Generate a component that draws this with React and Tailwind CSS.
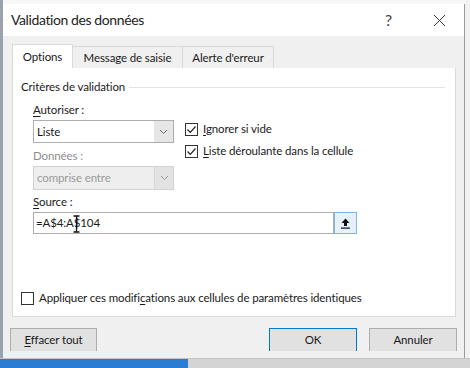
import React from "react";

function Check({ checked }) {
  return (
    <div className="w-[13px] h-[13px] border border-[#333] bg-white flex items-center justify-center shrink-0">
      {checked && (
        <svg width="11" height="11" viewBox="0 0 11 11">
          <path d="M1.5 5.5 L4.3 8.3 L9.5 2.5" fill="none" stroke="#222" strokeWidth="1.2" />
        </svg>
      )}
    </div>
  );
}

function Chevron({ color = "#666" }) {
  return (
    <svg width="9" height="6" viewBox="0 0 9 6">
      <path d="M1 1 L4.5 4.5 L8 1" fill="none" stroke={color} strokeWidth="1" />
    </svg>
  );
}

export default function App() {
  return (
    <div
      className="w-[470px] h-[368px] bg-[#f7f7f7] overflow-hidden flex flex-col text-[11.5px] tracking-[-0.12px] leading-[16px] text-[#1a1a1a]"
      style={{ fontFamily: 'Lato, "Noto Sans", sans-serif' }}
    >
      <div className="flex flex-1">
        <div className="w-[3px] bg-[#9aa3ad]" />
        {/* dialog */}
        <div className="mt-[4px] w-[462px] flex flex-col border-r border-[#9a9a9a] bg-[#f0f0f0]">
          <div className="h-[32px] bg-white flex items-center pl-[8px] pr-[18px]">
            <span className="text-[14px] tracking-[-0.4px] text-[#222] flex-1">Validation des données</span>
            <span className="text-[16px] text-[#444] mr-[41px]">?</span>
            <svg width="13" height="13" viewBox="0 0 13 13">
              <path d="M1 1 L12 12 M12 1 L1 12" stroke="#333" strokeWidth="1" />
            </svg>
          </div>

          <div className="pt-[9px] px-[9px]">
            {/* tabs */}
            <div className="flex items-end h-[23px]">
              <div className="w-[61px] h-[24px] bg-white border border-b-0 border-[#d9d9d9] flex items-center justify-center">
                Options
              </div>
              <div className="w-[110px] h-[22px] border-t border-r border-[#d9d9d9] flex items-center justify-center bg-[#f0f0f0]">
                Message de saisie
              </div>
              <div className="w-[91px] h-[22px] border-t border-r border-[#d9d9d9] flex items-center justify-center bg-[#f0f0f0]">
                Alerte d'erreur
              </div>
            </div>

            {/* panel */}
            <div className="w-[444px] h-[249px] bg-white border border-t-0 border-[#d9d9d9] pl-[8px] pt-[11px]">
              <div className="flex items-center h-[16px] pr-[10px]">
                <span>Critères de validation</span>
                <div className="flex-1 h-px bg-[#e3e3e3] ml-[4px]" />
              </div>

              <div className="pl-[12px]">
                <div className="mt-[7px] h-[16px]">
                  <span className="underline underline-offset-2">A</span>utoriser :
                </div>
                <div className="mt-[2px] flex h-[23px]">
                  <div className="w-[141px] h-[23px] border border-[#adadad] flex">
                    <div className="flex-1 flex items-center pl-[3px]">Liste</div>
                    <div className="w-[19px] bg-[#e6e6e6] flex items-center justify-center">
                      <Chevron />
                    </div>
                  </div>
                  <div className="ml-[11px] mt-[1px] flex flex-col gap-[6px]">
                    <div className="h-[16px] flex items-center gap-[5px]">
                      <Check checked />
                      <span>
                        <span className="underline underline-offset-2">I</span>gnorer si vide
                      </span>
                    </div>
                    <div className="h-[16px] flex items-center gap-[5px]">
                      <Check checked />
                      <span>
                        <span className="underline underline-offset-2">L</span>iste déroulante dans la cellule
                      </span>
                    </div>
                  </div>
                </div>

                <div className="mt-[5px] h-[16px] text-[#8d8d8d]">Données :</div>
                <div className="mt-[2px] w-[141px] h-[24px] border border-[#d2d2d2] bg-[#eeeeee] flex text-[#9a9a9a]">
                  <div className="flex-1 flex items-center pl-[3px]">comprise entre</div>
                  <div className="w-[19px] bg-[#e3e3e3] border-l border-[#d8d8d8] flex items-center justify-center">
                    <Chevron color="#9a9a9a" />
                  </div>
                </div>

                <div className="mt-[4px] h-[16px]">
                  <span className="underline underline-offset-2">S</span>ource :
                </div>
                <div className="mt-[2px] flex">
                  <div className="relative w-[301px] h-[22px] border border-[#adadad] flex items-center pl-[2px]">
                    =A$4:A$104
                    <svg className="absolute left-[39px] top-[2px]" width="7" height="18" viewBox="0 0 7 18">
                      <path d="M0.5 1 H6.5 M3.5 1 V17 M0.5 17 H6.5" stroke="#111" strokeWidth="1.3" fill="none" />
                    </svg>
                  </div>
                  <div className="w-[23px] h-[22px] border border-[#7eb4ea] bg-[#e5f1fb] flex items-center justify-center">
                    <svg width="11" height="11" viewBox="0 0 11 11">
                      <path d="M5.5 0.5 L9.5 5 L7 5 L7 8 L4 8 L4 5 L1.5 5 Z" fill="#111" />
                      <rect x="1" y="9.5" width="9" height="1.2" fill="#111" />
                    </svg>
                  </div>
                </div>
              </div>

              <div className="mt-[56px] h-[16px] flex items-center gap-[5px]">
                <Check />
                <span>
                  Appliquer ces modifi<span className="underline underline-offset-2">c</span>ations aux cellules de paramètres identiques
                </span>
              </div>
            </div>
          </div>

          {/* buttons */}
          <div className="mt-[11px] px-[7px] flex">
            <div className="w-[87px] h-[23px] bg-[#e1e1e1] border border-b-0 border-[#adadad] flex items-center justify-center">
              <span>
                <span className="underline underline-offset-2">E</span>ffacer tout
              </span>
            </div>
            <div className="flex-1" />
            <div className="w-[88px] h-[23px] bg-[#e1e1e1] border border-b-0 border-[#0078d7] flex items-center justify-center">
              OK
            </div>
            <div className="w-[88px] h-[23px] ml-[12px] bg-[#e1e1e1] border border-b-0 border-[#adadad] flex items-center justify-center">
              Annuler
            </div>
          </div>
          <div className="flex-1" />
        </div>
        <div className="flex-1 bg-[#f2f2f2]" />
      </div>

      {/* bottom taskbar strip */}
      <div className="h-[10px] flex border-t border-[#c4c4c4]">
        <div className="w-[188px] bg-[#2b7cd3]" />
        <div className="flex-1 bg-[#d4d4d4]" />
      </div>
    </div>
  );
}
